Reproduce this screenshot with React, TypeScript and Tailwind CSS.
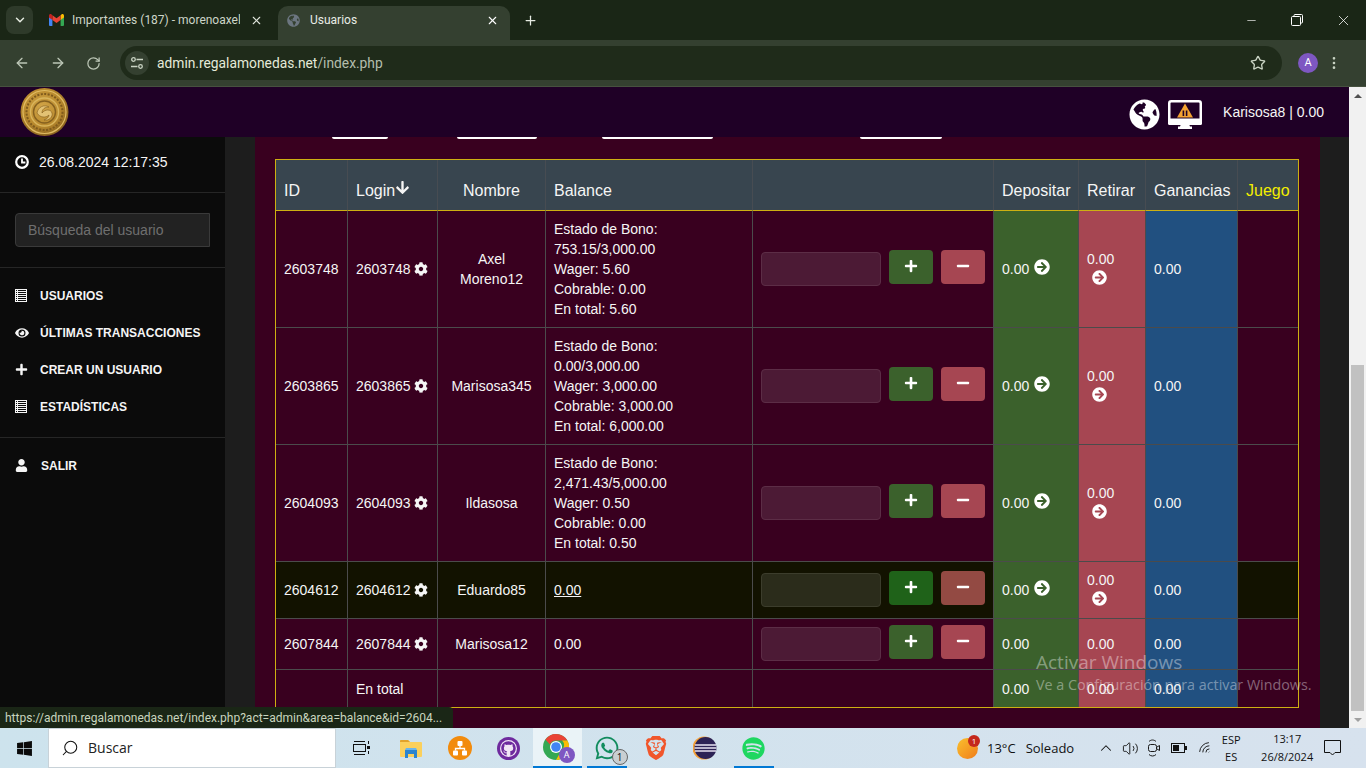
import React from "react";
import { ArrowLeft, ArrowRight, RotateCw, X, Plus, Minus, ChevronDown, ChevronUp, Star, Search, Volume2, EllipsisVertical, Wifi } from "lucide-react";
import { FaCog, FaArrowCircleRight, FaEye, FaUser, FaPlus, FaMinus, FaArrowDown, FaGlobeAmericas, FaWindows, FaWhatsapp, FaSpotify, FaGithub } from "react-icons/fa";
import { SiBrave } from "react-icons/si";

type Row = {
  id: string;
  name: string[];
  balance: string[];
  underline?: boolean;
  h: string;
  dark?: boolean;
  arrows?: boolean;
};

const rows: Row[] = [
  { id: "2603748", name: ["Axel", "Moreno12"], balance: ["Estado de Bono:", "753.15/3,000.00", "Wager: 5.60", "Cobrable: 0.00", "En total: 5.60"], h: "h-[117px]", arrows: true },
  { id: "2603865", name: ["Marisosa345"], balance: ["Estado de Bono:", "0.00/3,000.00", "Wager: 3,000.00", "Cobrable: 3,000.00", "En total: 6,000.00"], h: "h-[117px]", arrows: true },
  { id: "2604093", name: ["Ildasosa"], balance: ["Estado de Bono:", "2,471.43/5,000.00", "Wager: 0.50", "Cobrable: 0.00", "En total: 0.50"], h: "h-[117px]", arrows: true },
  { id: "2604612", name: ["Eduardo85"], balance: ["0.00"], underline: true, h: "h-[57px]", dark: true, arrows: true },
  { id: "2607844", name: ["Marisosa12"], balance: ["0.00"], h: "h-[51px]" },
];

const ListAlt = () => (
  <svg width="12" height="13" viewBox="0 0 12 13" className="shrink-0">
    <rect x="0" y="0" width="12" height="13" fill="#f5f5f5" />
    <rect x="1" y="1" width="10" height="11" fill="#0b0b0b" />
    <path d="M1 2.5h10M1 4.5h10M1 6.5h10M1 8.5h10M1 10.5h10" stroke="#f5f5f5" strokeWidth="1" />
    <path d="M2.5 1v11" stroke="#f5f5f5" strokeWidth="1" />
  </svg>
);

const ClockIcon = () => (
  <svg width="14" height="14" viewBox="0 0 14 14" className="shrink-0">
    <circle cx="7" cy="7" r="5.8" fill="none" stroke="#fff" strokeWidth="2.2" />
    <path d="M7 3.4V7.5H10.4" fill="none" stroke="#fff" strokeWidth="1.8" />
  </svg>
);

const Coin = () => (
  <svg width="49" height="50" viewBox="0 0 49 50" className="shrink-0">
    <defs>
      <radialGradient id="coin" cx="45%" cy="40%" r="65%">
        <stop offset="0%" stopColor="#d2a548" />
        <stop offset="60%" stopColor="#b98a2e" />
        <stop offset="100%" stopColor="#7f5a1c" />
      </radialGradient>
    </defs>
    <circle cx="24.5" cy="25" r="24" fill="url(#coin)" />
    <circle cx="24.5" cy="25" r="21.5" fill="none" stroke="#e0bb62" strokeWidth="1.2" />
    <circle cx="24.5" cy="25" r="18" fill="none" stroke="#7f5a1c" strokeWidth="2" strokeDasharray="2 1.5" />
    <circle cx="24.5" cy="25" r="14" fill="none" stroke="#d9b55c" strokeWidth="1.4" />
    <circle cx="24.5" cy="25" r="11" fill="none" stroke="#85601f" strokeWidth="1.4" />
    <path d="M17 26c1-6 7-9 12-6-4 0-7 2-7 6 3-4 9-4 10 0 1 4-3 8-8 7 3-1 5-3 5-5-3 3-9 3-12-2z" fill="#e3c274" stroke="#7f5a1c" strokeWidth="0.6" />
  </svg>
);

const Monitor = () => (
  <svg width="34" height="29" viewBox="0 0 34 29" className="shrink-0">
    <rect x="1.25" y="1.25" width="31.5" height="22" rx="2" fill="#1f0026" stroke="#fff" strokeWidth="2.5" />
    <rect x="0" y="18.5" width="34" height="6.5" rx="1.5" fill="#fff" />
    <path d="M13 24h8l1 2.5h2V29H10v-2.5h2z" fill="#fff" />
    <path d="M17 3.5l8 14H9z" fill="#f4a331" />
    <path d="M14.6 10.5h1.6v5.5h-1.6zM17.8 10.5h1.6v5.5h-1.6z" fill="#1f0026" />
  </svg>
);

const Gmail = () => (
  <svg width="15" height="12" viewBox="0 0 15 12" className="shrink-0">
    <path d="M0 2v9a1 1 0 0 0 1 1h2.4V5.4z" fill="#4285f4" />
    <path d="M15 2v9a1 1 0 0 1-1 1h-2.4V5.4z" fill="#34a853" />
    <path d="M11.6 1.2V6L15 3.4V1.6c0-1.3-1.5-2-2.5-1.2z" fill="#fbbc04" />
    <path d="M3.4 6V1.2l4.1 3.1 4.1-3.1V6L7.5 9.1z" fill="#ea4335" />
    <path d="M0 1.6v1.8L3.4 6V1.2L2.5.4C1.5-.4 0 .3 0 1.6z" fill="#c5221f" />
  </svg>
);

const Tune = () => (
  <svg width="14" height="14" viewBox="0 0 14 14" fill="none" stroke="#c9d3c3" strokeWidth="1.3">
    <circle cx="3.5" cy="3.5" r="1.8" />
    <path d="M6.5 3.5H13M1 10.5h6.5" />
    <circle cx="10.5" cy="10.5" r="1.8" />
  </svg>
);

const Restore = () => (
  <svg width="12" height="12" viewBox="0 0 12 12" fill="none" stroke="#fff" strokeWidth="1">
    <rect x="0.5" y="2.5" width="9" height="9" rx="1" />
    <path d="M3 2.5V1.5a1 1 0 0 1 1-1h6.5a1 1 0 0 1 1 1V8a1 1 0 0 1-1 1h-1" />
  </svg>
);

const ChromeIcon = () => (
  <div className="relative w-[30px] h-[30px] pt-[1px]">
    <svg width="26" height="26" viewBox="0 0 26 26" className="block">
      <circle cx="13" cy="13" r="13" fill="#34a853" />
      <path d="M13 0a13 13 0 0 1 11.3 6.5H13a6.5 6.5 0 0 0-6 4L2.4 5.6A13 13 0 0 1 13 0z" fill="#ea4335" />
      <path d="M24.3 6.5A13 13 0 0 1 13 26l5.6-9.7a6.5 6.5 0 0 0 .5-9.8z" fill="#fbbc04" />
      <circle cx="13" cy="13" r="6" fill="#fff" />
      <circle cx="13" cy="13" r="4.8" fill="#4285f4" />
    </svg>
    <div className="absolute right-[-2px] bottom-[0px] w-[16px] h-[16px] rounded-full bg-[#7e57c2] flex items-center justify-center text-[9px] text-white">A</div>
  </div>
);

const TaskView = () => (
  <svg width="17" height="16" viewBox="0 0 17 16" fill="none" stroke="#111" strokeWidth="1">
    <rect x="0.5" y="4.5" width="12" height="7" />
    <path d="M1 1.5h11M1 14.5h11M15.5 1v3M15.5 11v3" />
    <rect x="14" y="6" width="3" height="3" fill="#111" stroke="none" />
  </svg>
);

const Explorer = () => (
  <svg width="22" height="19" viewBox="0 0 22 19">
    <path d="M0 2a1 1 0 0 1 1-1h7l2 2h11a1 1 0 0 1 1 1v13a1 1 0 0 1-1 1H1a1 1 0 0 1-1-1z" fill="#fbd05c" />
    <path d="M0 2a1 1 0 0 1 1-1h7l2 2H0z" fill="#e2a32b" />
    <path d="M5 11h12v8h-3v-4H8v4H5z" fill="#2b85d0" />
    <path d="M6 9h10l1 2H5z" fill="#6bb5ea" />
  </svg>
);

const SourceTree = () => (
  <svg width="24" height="24" viewBox="0 0 24 24">
    <circle cx="12" cy="12" r="12" fill="#f28b0c" />
    <rect x="9.5" y="5" width="5" height="5" rx="1" fill="#fff" />
    <rect x="5" y="14.5" width="5" height="5" rx="1" fill="#fff" />
    <rect x="14" y="14.5" width="5" height="5" rx="1" fill="#fff" />
    <path d="M12 10v2.5M7.5 14.5v-2h9v2" stroke="#fff" strokeWidth="1.3" fill="none" />
  </svg>
);

const GithubDesk = () => (
  <div className="w-[23px] h-[23px] rounded-full bg-[#6e2a9e] flex items-center justify-center">
    <div className="w-[17px] h-[17px] rounded-full bg-[#f1e6f5] flex items-center justify-center">
      <FaGithub className="text-[#6e2a9e] text-[15px]" />
    </div>
  </div>
);

const Eclipse = () => (
  <svg width="24" height="24" viewBox="0 0 24 24">
    <circle cx="11" cy="12" r="11.5" fill="#f4a13a" />
    <circle cx="12.5" cy="12" r="11" fill="#2c2255" />
    <path d="M2 9h21M1.5 12h22M2 15h21" stroke="#e8e4f2" strokeWidth="1.4" />
  </svg>
);

const Camera = () => (
  <svg width="12" height="18" viewBox="0 0 12 18" fill="none" stroke="#1a1a1a" strokeWidth="1">
    <path d="M1 2.5c2-2 5-2 7 0M1 15.5c2 2 5 2 7 0" />
    <rect x="0.5" y="5.5" width="8" height="7" rx="2" />
    <path d="M9 8l2.5-1.5v5L9 10" />
  </svg>
);

const Battery = () => (
  <svg width="16" height="10" viewBox="0 0 16 10" fill="none" stroke="#111">
    <rect x="0.5" y="0.5" width="13" height="9" />
    <rect x="2" y="2" width="6" height="6" fill="#111" stroke="none" />
    <rect x="14" y="3" width="2" height="4" fill="#111" stroke="none" />
  </svg>
);

const Notif = () => (
  <svg width="17" height="16" viewBox="0 0 17 16" fill="none" stroke="#111">
    <path d="M0.5 0.5h16v12h-5.5l-2.5 2.5-2.5-2.5H0.5z" />
  </svg>
);

const Cell = ({ className = "", children }: { className?: string; children?: React.ReactNode }) => (
  <td className={`border-r border-b border-[#4b4b4b] p-2 align-middle ${className}`}>{children}</td>
);

const Th = ({ className = "text-left", children }: { className?: string; children?: React.ReactNode }) => (
  <th className={`border-r border-b border-r-[#474c52] border-b-[#cdb012] px-2 pb-2 align-bottom font-normal text-[16px] leading-[23px] ${className}`}>{children}</th>
);

const Arrow = ({ className = "text-[16px]" }: { className?: string }) => (
  <FaArrowCircleRight className={`inline-block text-white align-[-1px] ml-[1px] ${className}`} />
);

function SideItem({ icon, label, className = "" }: { icon: React.ReactNode; label: string; className?: string }) {
  return (
    <div className={`h-[37px] flex items-center pl-[15px] text-[12px] font-bold uppercase text-[#f5f5f5] ${className}`}>
      <span className="w-[25px] flex items-center">{icon}</span>
      {label}
    </div>
  );
}

function TaskIcon({ children, active, run }: { children: React.ReactNode; active?: boolean; run?: boolean }) {
  return (
    <div className={`relative w-[49px] h-[40px] flex items-center justify-center shrink-0 ${active ? "bg-[#eaf3f7]" : ""}`}>
      {children}
      {run && <div className={`absolute bottom-0 h-[2px] bg-[#0078d4] ${active ? "left-0 right-0" : "left-[5px] right-[4px]"}`} />}
    </div>
  );
}

export default function App() {
  return (
    <div className="w-[1366px] h-[768px] overflow-hidden flex flex-col relative font-['Liberation_Sans',Arial,sans-serif] text-[14px] leading-[20px] text-[#f5f5f5] bg-[#1d1d1d]">
      {/* Tab strip */}
      <div className="h-[40px] bg-[#1a2616] flex items-end shrink-0 relative font-['Roboto',sans-serif]">
        <div className="absolute left-[6px] top-[6px] w-[27px] h-[28px] rounded-lg bg-[#2e3a2a] flex items-center justify-center">
          <ChevronDown size={14} strokeWidth={2.5} className="text-[#e6ebe2]" />
        </div>
        <div className="ml-[40px] w-[238px] h-[34px] flex items-center pl-[9px] pr-[15px] pb-[6px] text-[12px] text-[#cdd5c8]">
          <Gmail />
          <span className="ml-[8px] w-[168px] overflow-hidden whitespace-nowrap">Importantes (187) - morenoaxel</span>
          <X size={13} className="ml-auto text-[#e0e5dc]" />
        </div>
        <div className="w-[232px] h-[34px] rounded-t-[10px] bg-[#344030] flex items-center pl-[9px] pr-[11px] pb-[6px] text-[12px] text-[#e8ece5]">
          <FaGlobeAmericas className="text-[#6c7680] text-[13px]" />
          <span className="ml-[10px]">Usuarios</span>
          <X size={13} className="ml-auto text-white" />
        </div>
        <div className="w-[40px] h-[34px] pb-[6px] flex items-center justify-center">
          <Plus size={15} className="text-[#e6ebe2]" />
        </div>
        <div className="ml-auto flex h-[40px] items-center text-white">
          <div className="w-[46px] flex justify-center"><Minus size={13} strokeWidth={1.2} /></div>
          <div className="w-[46px] flex justify-center"><Restore /></div>
          <div className="w-[46px] flex justify-center"><X size={17} strokeWidth={1.1} /></div>
        </div>
      </div>
      {/* Toolbar */}
      <div className="h-[47px] bg-[#344030] flex items-center shrink-0 border-b border-[#46513f] font-['Roboto',sans-serif]">
        <div className="w-[120px] flex items-center pl-[14px] gap-[20px] text-[#bcc6b6]">
          <ArrowLeft size={16} />
          <ArrowRight size={16} />
          <RotateCw size={15} />
        </div>
        <div className="w-[1162px] h-[34px] rounded-full bg-[#1f2b1a] flex items-center pl-[5px] pr-[16px]">
          <div className="w-[24px] h-[24px] rounded-full bg-[#344030] flex items-center justify-center"><Tune /></div>
          <span className="ml-[8px] text-[13.8px] text-[#e4ead9]">admin.regalamonedas.net<span className="text-[#b4bead]">/index.php</span></span>
          <Star size={16} className="ml-auto text-[#c9d3c3]" />
        </div>
        <div className="w-[20px] h-[20px] rounded-full bg-[#7e57c2] ml-[16px] flex items-center justify-center text-[11px] text-white">A</div>
        <EllipsisVertical size={16} className="ml-[8px] text-[#c9d3c3]" />
      </div>
      {/* Page */}
      <div className="flex-1 flex min-h-0">
        <div className="w-[1349px] flex flex-col min-h-0">
          <div className="h-[50px] bg-[#1f0026] flex items-center shrink-0 pl-[20px] pr-[25px]">
            <Coin />
            <FaGlobeAmericas className="ml-auto mt-[5px] text-white text-[31px]" />
            <div className="ml-[8px] mt-[5px]"><Monitor /></div>
            <span className="ml-[21px]">Karisosa8 | 0.00</span>
          </div>
          <div className="flex-1 flex min-h-0">
            <aside className="w-[225px] bg-[#0b0b0b] shrink-0">
              <div className="h-[56px] border-b border-[#262626] flex items-center pl-[15px] pb-[6px]">
                <ClockIcon />
                <span className="ml-[10px]">26.08.2024 12:17:35</span>
              </div>
              <div className="h-[75px] border-b border-[#262626] pl-[15px] pt-[20px]">
                <div className="w-[195px] h-[34px] bg-[#222222] border border-[#3a3a3a] rounded-l-[4px] flex items-center pl-[12px] text-[#6f6f6f]">Búsqueda del usuario</div>
              </div>
              <div className="h-[170px] border-b border-[#262626] pt-[9px]">
                <SideItem icon={<ListAlt />} label="Usuarios" />
                <SideItem icon={<FaEye className="text-[14px]" />} label="Últimas transacciones" />
                <SideItem icon={<FaPlus className="text-[13px]" />} label="Crear un usuario" />
                <SideItem icon={<ListAlt />} label="Estadísticas" />
              </div>
              <div className="pt-[9px]">
                <SideItem icon={<FaUser className="text-[13px]" />} label="Salir" className="[&>span]:w-[26px]" />
              </div>
            </aside>
            <div className="w-[30px] bg-[#1d1d1d] shrink-0" />
            <main className="w-[1065px] bg-[#39001f] shrink-0 px-[20px]">
              <div className="flex h-[2px] mb-[20px]">
                <div className="ml-[57px] w-[56px] bg-white rounded-b-[3px]" />
                <div className="ml-[69px] w-[80px] bg-white rounded-b-[3px]" />
                <div className="ml-[65px] w-[111px] bg-white rounded-b-[3px]" />
                <div className="ml-[147px] w-[82px] bg-white rounded-b-[3px]" />
              </div>
              <div className="w-[1024px] border border-[#cdb012]">
                <table className="table-fixed w-[1022px] border-separate border-spacing-0">
                  <colgroup>
                    <col className="w-[72px]" /><col className="w-[90px]" /><col className="w-[108px]" /><col className="w-[207px]" /><col className="w-[241px]" />
                    <col className="w-[85px]" /><col className="w-[67px]" /><col className="w-[92px]" /><col className="w-[60px]" />
                  </colgroup>
                  <thead>
                    <tr className="bg-[#38454f] h-[51px]">
                      <Th>ID</Th>
                      <Th className="text-left whitespace-nowrap">Login<FaArrowDown className="inline-block text-[15px] align-[1px]" /></Th>
                      <Th className="text-center">Nombre</Th>
                      <Th>Balance</Th>
                      <Th />
                      <Th className="text-left whitespace-nowrap">Depositar</Th>
                      <Th>Retirar</Th>
                      <Th>Ganancias</Th>
                      <Th className="text-left border-r-0 text-[#f4ee00]">Juego</Th>
                    </tr>
                  </thead>
                  <tbody>
                    {rows.map((r) => (
                      <tr key={r.id} className={r.dark ? "bg-[#121200]" : ""}>
                        <Cell className={r.h}>{r.id}</Cell>
                        <Cell className="whitespace-nowrap">{r.id} <FaCog className="inline-block text-[14px] align-[-2px]" /></Cell>
                        <Cell className="text-center">{r.name.map((n) => <div key={n}>{n}</div>)}</Cell>
                        <Cell>
                          {r.balance.map((b) => (
                            <div key={b} className={r.underline ? "underline" : ""}>{b}</div>
                          ))}
                        </Cell>
                        <Cell>
                          <div className="flex items-center gap-2">
                            <div className={`w-[120px] h-[34px] rounded-[4px] border ${r.dark ? "bg-[#2b2c1b] border-[#3c3d2c]" : "bg-[#4c1a35] border-[#5c2d46]"}`} />
                            <div className={`w-[44px] h-[34px] rounded-[4px] -mt-[4px] flex items-center justify-center ${r.dark ? "bg-[#1f6219]" : "bg-[#3b612c]"}`}>
                              <FaPlus className="text-white text-[14px] -mt-[3px]" />
                            </div>
                            <div className={`w-[44px] h-[34px] rounded-[4px] -mt-[4px] flex items-center justify-center ${r.dark ? "bg-[#934a43]" : "bg-[#a64652]"}`}>
                              <FaMinus className="text-white text-[14px] -mt-[3px]" />
                            </div>
                          </div>
                        </Cell>
                        <Cell className="bg-[#3b612c]">0.00 {r.arrows && <Arrow />}</Cell>
                        <Cell className="bg-[#a64652]">
                          <div>0.00</div>
                          {r.arrows && <div className="pl-[4px] leading-[20px]"><Arrow className="text-[15px]" /></div>}
                        </Cell>
                        <Cell className="bg-[#215080]">0.00</Cell>
                        <Cell className="border-r-0" />
                      </tr>
                    ))}
                    <tr>
                      <td className="h-[37px] border-r border-[#4b4b4b]" />
                      <td className="border-r border-[#4b4b4b] px-2">En total</td>
                      <td className="border-r border-[#4b4b4b]" />
                      <td className="border-r border-[#4b4b4b]" />
                      <td className="border-r border-[#4b4b4b]" />
                      <td className="border-r border-[#4b4b4b] bg-[#3b612c] px-2">0.00</td>
                      <td className="border-r border-[#4b4b4b] bg-[#a64652] px-2">0.00</td>
                      <td className="border-r border-[#4b4b4b] bg-[#215080] px-2">0.00</td>
                      <td />
                    </tr>
                  </tbody>
                </table>
              </div>
            </main>
            <div className="flex-1 bg-[#1d1d1d]" />
          </div>
        </div>
        {/* Scrollbar */}
        <div className="w-[17px] bg-[#f1f1f1] flex flex-col items-center shrink-0">
          <div className="h-[17px] flex items-center justify-center">
            <div className="w-0 h-0 border-l-[4px] border-r-[4px] border-b-[4px] border-l-transparent border-r-transparent border-b-[#505050]" />
          </div>
          <div className="mt-[261px] w-[13px] h-[346px] bg-[#c1c1c1]" />
          <div className="h-[17px] flex items-center justify-center">
            <div className="w-0 h-0 border-l-[4px] border-r-[4px] border-t-[4px] border-l-transparent border-r-transparent border-t-[#a0a0a0]" />
          </div>
        </div>
      </div>
      {/* Taskbar */}
      <div className="h-[40px] shrink-0 flex items-center bg-gradient-to-r from-[#cde3ed] to-[#d7e2ee] text-[#111] font-['Open_Sans','Noto_Sans',sans-serif]">
        <div className="w-[48px] flex justify-center"><FaWindows className="text-[#0a0a0a] text-[17px]" /></div>
        <div className="w-[288px] h-[40px] bg-white border border-[#c8d2d8] flex items-center pl-[12px] text-[14px]">
          <Search size={18} strokeWidth={1.4} className="-scale-x-100" />
          <span className="ml-[9px] text-[#222]">Buscar</span>
        </div>
        <div className="w-[50px] flex justify-center"><TaskView /></div>
        <TaskIcon><Explorer /></TaskIcon>
        <TaskIcon><SourceTree /></TaskIcon>
        <TaskIcon><GithubDesk /></TaskIcon>
        <TaskIcon active run><ChromeIcon /></TaskIcon>
        <TaskIcon run>
          <div className="relative">
            <FaWhatsapp className="text-[#128c5e] text-[26px]" />
            <div className="absolute -right-[8px] -bottom-[4px] w-[16px] h-[16px] rounded-full bg-[#c9cfd2] border border-[#666] flex items-center justify-center text-[10px] leading-none text-[#111]">1</div>
          </div>
        </TaskIcon>
        <TaskIcon><SiBrave className="text-[#f1562b] text-[24px]" /></TaskIcon>
        <TaskIcon><Eclipse /></TaskIcon>
        <TaskIcon run><FaSpotify className="text-[#1ed760] text-[23px]" /></TaskIcon>
        <div className="relative ml-[179px] w-[21px] h-[21px] rounded-full bg-gradient-to-br from-[#f9c02d] to-[#ef7b1b] shrink-0">
          <div className="absolute -right-[2px] -top-[3px] w-[12px] h-[12px] rounded-full bg-[#c4281c] text-white text-[8px] leading-[12px] text-center">1</div>
        </div>
        <span className="ml-[9px] text-[13px] whitespace-nowrap">13°C</span>
        <span className="ml-[10px] text-[13px] whitespace-nowrap">Soleado</span>
        <ChevronUp size={18} strokeWidth={1.4} className="ml-[23px]" />
        <Volume2 size={17} strokeWidth={1.3} className="ml-[7px]" />
        <div className="ml-[9px]"><Camera /></div>
        <div className="ml-[11px]"><Battery /></div>
        <Wifi size={15} strokeWidth={1.4} className="ml-[11px] -rotate-45" />
        <div className="ml-[7px] w-[22px] text-center text-[11px] leading-[17px]">ESP<br />ES</div>
        <div className="ml-[17px] w-[56px] text-center text-[11px] leading-[18px] whitespace-nowrap">13:17<br />26/8/2024</div>
        <div className="ml-[9px]"><Notif /></div>
      </div>
      {/* Status bubble */}
      <div className="absolute left-0 top-[707px] w-[453px] h-[21px] bg-[#1a2616] rounded-tr-[4px] pl-[5px] text-[12px] leading-[22px] text-[#c9d5bf] whitespace-nowrap font-['Roboto',sans-serif]">
        https://admin.regalamonedas.net/index.php?act=admin&amp;area=balance&amp;id=2604...
      </div>
      {/* Windows watermark */}
      <div className="absolute left-[1036px] top-[650px] text-white/40 pointer-events-none font-['Open_Sans','Noto_Sans',sans-serif] whitespace-nowrap">
        <div className="text-[19px] leading-[25px]">Activar Windows</div>
        <div className="text-[14.3px] leading-[20px]">Ve a Configuración para activar Windows.</div>
      </div>
    </div>
  );
}
